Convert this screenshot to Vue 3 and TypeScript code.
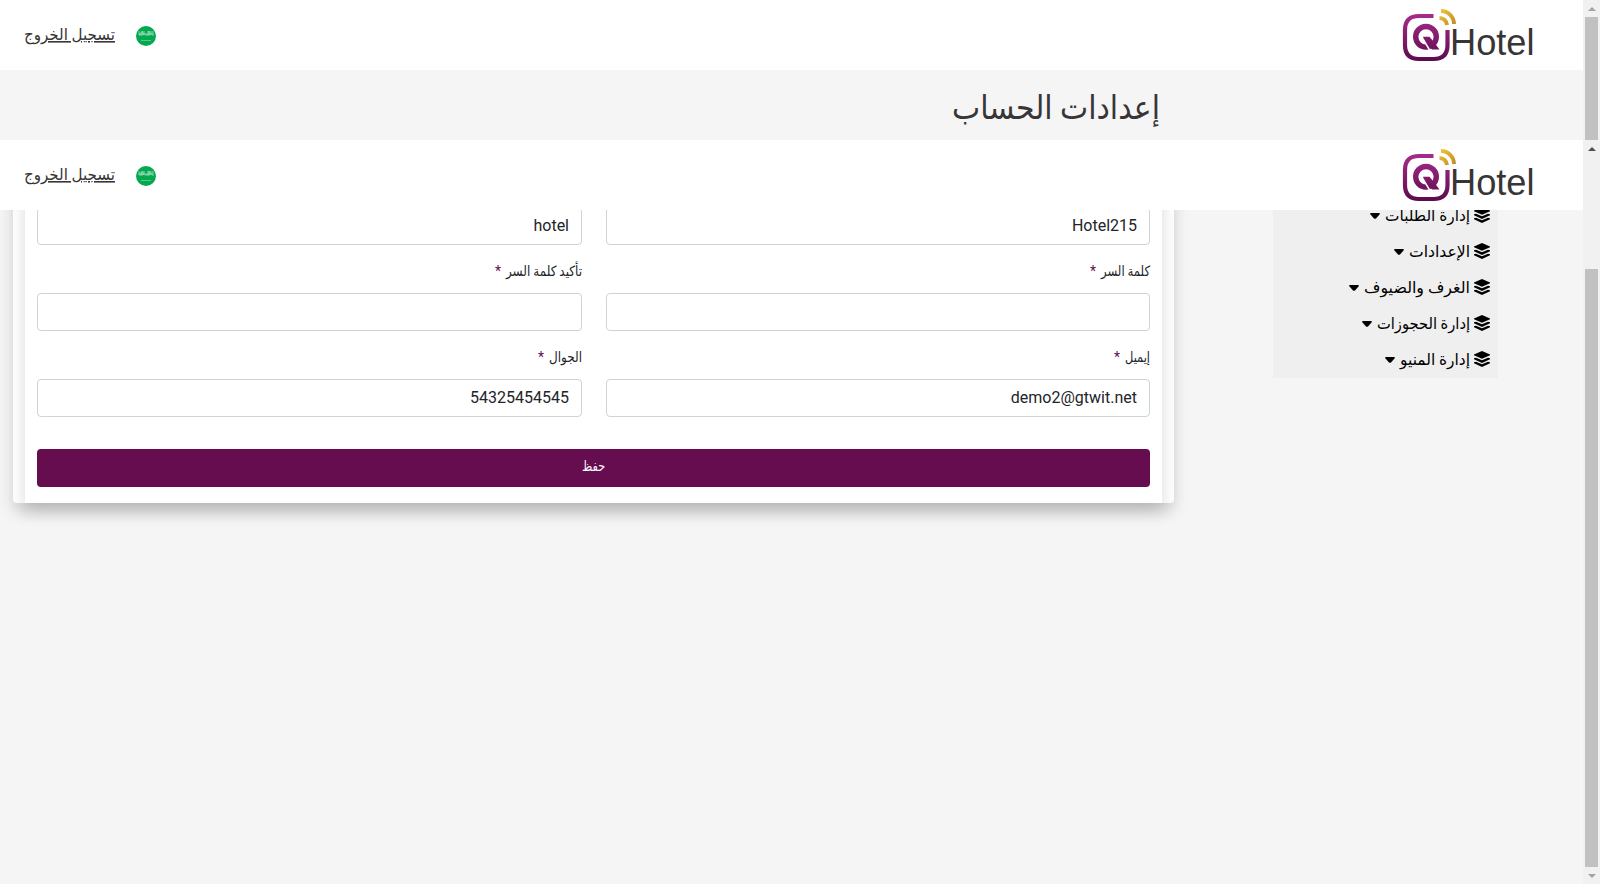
<script setup lang="ts">
interface MenuItem { label: string; width: number }
interface Field { label: string; width: number; value: string }

const bars: string[] = ['outer', 'inner']
const menu: MenuItem[] = [
  { label: 'إدارة الطلبات', width: 85 },
  { label: 'الإعدادات', width: 61 },
  { label: 'الغرف والضيوف', width: 106 },
  { label: 'إدارة الحجوزات', width: 93 },
  { label: 'إدارة المنيو', width: 70 },
]
const fields: Field[] = [
  { label: 'اسم الفندق', width: 54, value: 'Hotel215' },
  { label: 'اسم المستخدم', width: 70, value: 'hotel' },
  { label: 'كلمة السر', width: 49, value: '' },
  { label: 'تأكيد كلمة السر', width: 76, value: '' },
  { label: 'إيميل', width: 25, value: 'demo2@gtwit.net' },
  { label: 'الجوال', width: 33, value: '54325454545' },
]
</script>

<template>
  <div class="page">
    <section v-for="bar in bars" :key="bar" class="frame" :class="bar">
      <div class="view">
        <header class="navbar" dir="rtl">
          <svg class="logo" width="134" height="56" viewBox="0 0 134 56" direction="ltr">
            <defs>
              <linearGradient :id="'plum-' + bar" gradientUnits="userSpaceOnUse" x1="0" y1="5" x2="0" y2="53">
                <stop offset="0" stop-color="#a92c8d" />
                <stop offset="1" stop-color="#5b0c4d" />
              </linearGradient>
              <linearGradient :id="'gold-' + bar" gradientUnits="userSpaceOnUse" x1="38" y1="2" x2="54" y2="18">
                <stop offset="0" stop-color="#f0c83a" />
                <stop offset="1" stop-color="#bd8927" />
              </linearGradient>
            </defs>
            <g fill="none" :stroke="'url(#plum-' + bar + ')'">
              <path d="M32.500 8H18Q4 8 4 22V37Q4 51 18 51H32.500Q46.500 51 46.500 37V22" stroke-width="4.200" />
              <circle cx="25" cy="28.800" r="10.300" stroke-width="5.400" />
            </g>
            <path d="M22 28.800H28.500L32.500 33.500L38.500 41.600H31L28.300 38L26 41Z" :fill="'url(#plum-' + bar + ')'" />
            <path d="M22 31L28.500 41.800" stroke="#fff" stroke-width="1.600" />
            <g fill="none" :stroke="'url(#gold-' + bar + ')'">
              <path d="M40 3A13 13 0 0 1 53 16" stroke-width="3.900" />
              <path d="M38.500 10A7.500 7.500 0 0 1 46 17" stroke-width="3.900" />
            </g>
            <text x="49" y="47" font-family="Liberation Sans, sans-serif" font-size="36" fill="#373536" textLength="84.500" lengthAdjust="spacingAndGlyphs">Hotel</text>
          </svg>
          <div class="account">
            <svg class="flag" width="20" height="20" viewBox="0 0 20 20">
              <circle cx="10" cy="10" r="10" fill="#04a94f" />
              <g fill="none" stroke="#a7e1c3" stroke-width=".8">
                <path d="M3 5v4h2V6M6 10V5l2 4V5M9 9h3V5M13 10V5l2 4V5M17 5v5M3 8h14" />
                <path d="M5 14.500h10" stroke="#72cf9b" />
              </g>
            </svg>
            <a class="logout">
              <svg class="arabic" width="91" height="26"><text x="91" y="17" textLength="91" lengthAdjust="spacingAndGlyphs">تسجيل الخروج</text></svg>
            </a>
          </div>
        </header>
        <h1 v-if="bar === 'outer'" class="title" dir="rtl">
          <svg class="arabic" width="208" height="60"><text x="208" y="37" textLength="208" lengthAdjust="spacingAndGlyphs">إعدادات الحساب</text></svg>
        </h1>
        <main v-else class="content" dir="rtl">
          <aside class="sidebar">
            <div v-for="item in menu" :key="item.label" class="item">
              <svg class="layers" width="16" height="16" viewBox="0 0 16 16">
                <path d="M8 0L16 3.600V4.300L8 7.800L0 4.300V3.600Z" />
                <path d="M0 7.200L2 6.700L8 9.300L14 6.700L16 7.200V8.200L8 11.900L0 8.200Z" />
                <path d="M0 11.200L2 10.700L8 13.300L14 10.700L16 11.200V12.200L8 15.900L0 12.200Z" />
              </svg>
              <svg class="label arabic" :width="item.width" height="28">
                <text :x="item.width" y="19" :textLength="item.width" lengthAdjust="spacingAndGlyphs">{{ item.label }}</text>
              </svg>
              <svg class="caret" width="10" height="6" viewBox="0 0 10 6"><path d="M1 0H9Q10.500 .5 9.500 1.500L6 5.400Q5 6.300 4 5.400L.5 1.500Q-.5 .5 1 0Z" /></svg>
            </div>
          </aside>
          <div class="card">
            <form class="form" @submit.prevent>
              <div class="grid">
                <div v-for="field in fields" :key="field.label" class="field">
                  <label>
                    <svg class="arabic" :width="field.width" height="24">
                      <text :x="field.width" y="15" :textLength="field.width" lengthAdjust="spacingAndGlyphs">{{ field.label }}</text>
                    </svg>
                    <b>*</b>
                  </label>
                  <div class="input">{{ field.value }}</div>
                </div>
              </div>
              <button type="submit">
                <svg class="arabic" width="23" height="24"><text x="23" y="15" textLength="23" lengthAdjust="spacingAndGlyphs">حفظ</text></svg>
              </button>
            </form>
          </div>
        </main>
      </div>
      <div class="scrollbar">
        <i class="up"></i>
        <div class="track"><div class="thumb"></div></div>
        <i v-if="bar === 'inner'" class="down"></i>
      </div>
    </section>
  </div>
</template>

<style>
html, body { margin: 0; overflow: hidden; }
</style>
<style scoped>
* { box-sizing: border-box; }
.page { width: 1600px; height: 884px; overflow: hidden; background: #f5f5f5; font-family: Roboto, "DejaVu Sans", sans-serif; color: #212529; }
.frame { display: flex; overflow: hidden; }
.outer { height: 140px; }
.inner { height: 744px; }
.view { width: 1583px; overflow: hidden; }
.navbar { height: 70px; background: #fff; display: flex; justify-content: space-between; align-items: flex-start; padding: 8px 48px 0 24px; position: relative; z-index: 2; }
.logo { display: block; }
.arabic { display: block; overflow: visible; direction: rtl; fill: currentColor; }
.account { display: flex; align-items: center; gap: 21px; height: 56px; }
.logout { font-size: 16px; color: #373536; }
.logout text { text-decoration: underline; }
.title { margin: 0; padding: 12px 423px 0 0; height: 70px; font-size: 33px; line-height: 48px; font-weight: 400; color: #373536; }
.content { display: flex; justify-content: space-between; padding: 0 85px 0 13px; }
.sidebar { width: 225px; height: 168px; background: #efefef; padding: 0 8px; overflow: hidden; color: #000; }
.item { height: 36px; display: flex; align-items: center; }
.item:first-child { margin-top: -12px; }
.label { margin-right: 4px; font-size: 16px; }
.layers { margin-top: -2px; }
.caret { margin-right: 5px; }
.card { width: 1161px; height: 363px; margin-top: -70px; padding: 0 12px; background: #fff; border-radius: 4px; box-shadow: 0 8px 16px rgba(0,0,0,.15); }
.form { height: 363px; padding: 35px 12px 0; background: #fff; box-shadow: 0 8px 16px rgba(0,0,0,.15); }
.grid { display: grid; grid-template-columns: 544px 545px; column-gap: 24px; row-gap: 16px; }
label { display: flex; gap: 5px; height: 24px; margin-bottom: 8px; font-size: 14px; line-height: 22px; white-space: nowrap; }
b { font-weight: 400; font-size: 14px; line-height: 21px; color: #660d50; }
.input { height: 38px; border: 1px solid #ced4da; border-radius: 4px; padding: 0 12px; font-size: 16px; line-height: 35px; text-align: right; direction: ltr; }
button { display: flex; align-items: center; justify-content: center; width: 100%; height: 38px; margin-top: 32px; border: 0; border-radius: 4px; background: #660d50; color: #fff; font: 14px/24px Roboto, "DejaVu Sans", sans-serif; padding: 0; }
.scrollbar { width: 17px; background: #f1f1f1; display: flex; flex-direction: column; align-items: center; }
.up, .down { flex: 0 0 17px; display: flex; align-items: center; justify-content: center; }
.up::before, .down::before { content: ""; border: 4px solid transparent; border-top: 0; border-bottom-color: #505050; }
.outer .up::before { border-bottom-color: #a3a3a3; }
.down::before { border-bottom: 0; border-top: 4px solid #a3a3a3; }
.track { width: 13px; flex: 1; }
.thumb { height: 100%; background: #c1c1c1; }
.inner .track { padding-top: 112px; }
</style>
